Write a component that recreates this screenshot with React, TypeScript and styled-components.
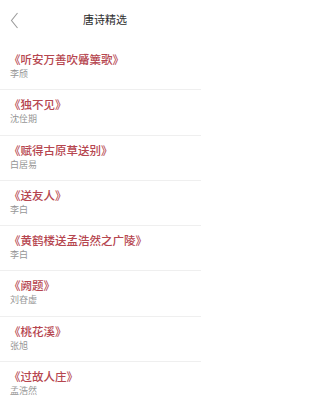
import React from 'react';
import styled, { createGlobalStyle } from 'styled-components';

const GlobalStyle = createGlobalStyle`
  html, body {
    margin: 0;
    padding: 0;
    background: #ffffff;
    font-family: "Noto Sans CJK SC", "Noto Sans", sans-serif;
  }
`;

interface Poem {
  title: string;
  author: string;
}

const poems: Poem[] = [
  { title: '听安万善吹觱篥歌', author: '李颀' },
  { title: '独不见', author: '沈佺期' },
  { title: '赋得古原草送别', author: '白居易' },
  { title: '送友人', author: '李白' },
  { title: '黄鹤楼送孟浩然之广陵', author: '李白' },
  { title: '阙题', author: '刘昚虚' },
  { title: '桃花溪', author: '张旭' },
  { title: '过故人庄', author: '孟浩然' },
];

const Page = styled.div`
  width: 210px;
  height: 400px;
  overflow: hidden;
  background: #fff;
`;

const NavBar = styled.header`
  position: relative;
  height: 38px;
  display: flex;
  align-items: center;
  justify-content: center;
  margin-bottom: 7px;
`;

const BackButton = styled.button`
  position: absolute;
  left: 6px;
  top: 10px;
  width: 16px;
  height: 20px;
  padding: 0;
  border: none;
  background: none;
  display: flex;
  align-items: center;
  justify-content: center;
`;

const NavTitle = styled.h1`
  margin: 0;
  font-size: 11px;
  font-weight: 400;
  color: #2e2e2e;
  line-height: 16px;
`;

const List = styled.ul`
  list-style: none;
  margin: 0;
  padding: 0;
`;

const Row = styled.li`
  box-sizing: border-box;
  height: 45.3px;
  margin-right: 9px;
  padding: 6px 0 0 9px;
  border-bottom: 1px solid #efefef;
`;

const PoemTitle = styled.div`
  font-size: 11.5px;
  font-weight: 500;
  line-height: 16px;
  color: #b6464f;
  white-space: nowrap;
`;

const PoemAuthor = styled.div`
  font-size: 9px;
  line-height: 13px;
  color: #969696;
  padding-left: 1px;
`;

export default function App() {
  return (
    <Page>
      <GlobalStyle />
      <NavBar>
        <BackButton aria-label="返回">
          <svg width="9" height="17" viewBox="0 0 9 17" fill="none">
            <path d="M7.5 1 L1.5 8.5 L7.5 16" stroke="#9c9c9c" strokeWidth="1.1" />
          </svg>
        </BackButton>
        <NavTitle>唐诗精选</NavTitle>
      </NavBar>
      <List>
        {poems.map((p, i) => (
          <Row key={i}>
            <PoemTitle>《{p.title}》</PoemTitle>
            <PoemAuthor>{p.author}</PoemAuthor>
          </Row>
        ))}
      </List>
    </Page>
  );
}
